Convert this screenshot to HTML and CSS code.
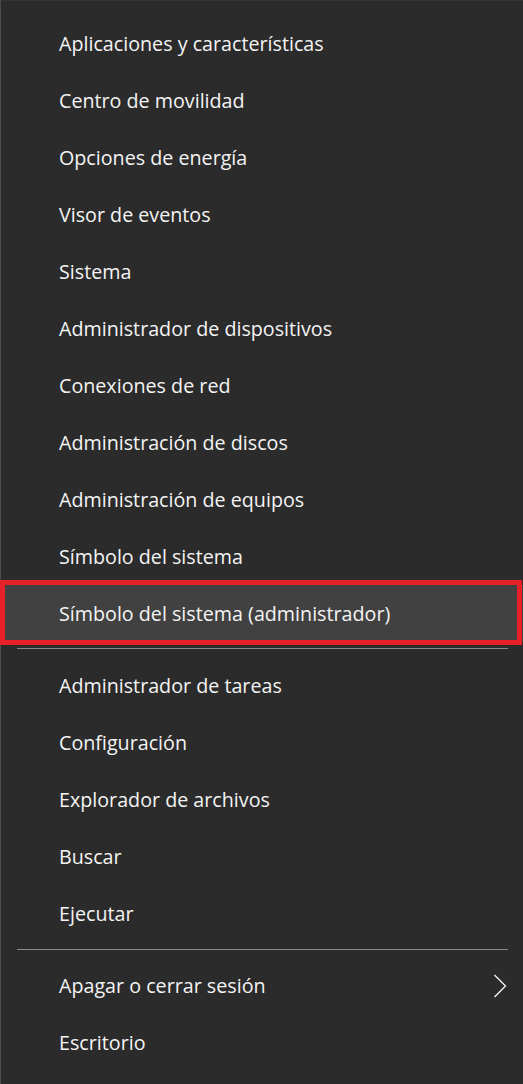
FILE: index.html
```html
<!DOCTYPE html>
<html lang="es">
<head>
<meta charset="utf-8">
<link rel="stylesheet" href="styles.css">
</head>
<body>
<div class="menu">
  <div class="item">Aplicaciones y características</div>
  <div class="item">Centro de movilidad</div>
  <div class="item">Opciones de energía</div>
  <div class="item">Visor de eventos</div>
  <div class="item">Sistema</div>
  <div class="item">Administrador de dispositivos</div>
  <div class="item">Conexiones de red</div>
  <div class="item">Administración de discos</div>
  <div class="item">Administración de equipos</div>
  <div class="item">Símbolo del sistema</div>
  <div class="item active">Símbolo del sistema (administrador)</div>
  <div class="sep"></div>
  <div class="item">Administrador de tareas</div>
  <div class="item">Configuración</div>
  <div class="item">Explorador de archivos</div>
  <div class="item">Buscar</div>
  <div class="item">Ejecutar</div>
  <div class="sep sep-low"></div>
  <div class="item sub">Apagar o cerrar sesión
    <svg class="chev" width="14" height="24" viewBox="0 0 14 24"><path d="M1.5 1 L12.5 12 L1.5 23" fill="none" stroke="#f2f2f2" stroke-width="1.4"/></svg>
  </div>
  <div class="item">Escritorio</div>
  <div class="mark"></div>
</div>
</body>
</html>
```
FILE: styles.css
```css
html, body {
  margin: 0;
  padding: 0;
  background: #2b2b2b;
}
.menu {
  position: relative;
  width: 523px;
  height: 1084px;
  box-sizing: border-box;
  padding-top: 14px;
  background: #2b2b2b;
  border-left: 1px solid #4a4d50;
  border-top: 1px solid #333;
  font-family: "Open Sans", "Noto Sans", sans-serif;
  font-size: 19.7px;
  color: #f4f4f4;
}
.item {
  height: 57px;
  line-height: 57px;
  padding-left: 58px;
  padding-right: 16px;
  display: flex;
  align-items: center;
  justify-content: space-between;
  white-space: nowrap;
}
.item.active {
  background: #414141;
}
.sep {
  height: 1px;
  background: #8a8a8a;
  margin: 6px 15px 8px 16px;
}
.sep-low {
  margin-top: 7px;
  margin-bottom: 7px;
}
.chev {
  display: block;
}
.mark {
  position: absolute;
  left: -1px;
  top: 579px;
  width: 522px;
  height: 65px;
  box-sizing: border-box;
  border: 5px solid #e8202a;
}
```
